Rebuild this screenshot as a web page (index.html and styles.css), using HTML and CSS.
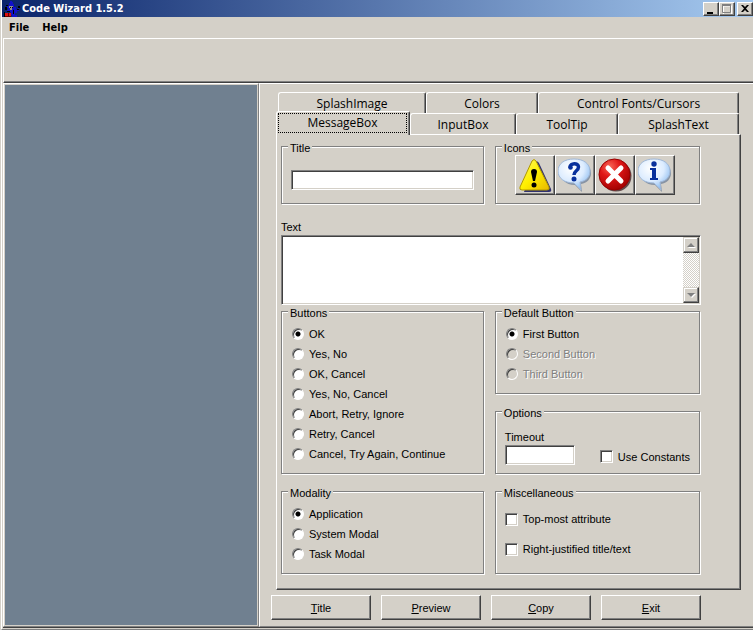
FILE: index.html
```html
<!DOCTYPE html>
<html lang="en">
<head>
<meta charset="utf-8">
<title>Code Wizard 1.5.2</title>
<link rel="stylesheet" href="styles.css">
</head>
<body>
<div class="window">
  <header class="titlebar">
    <svg class="logo" viewBox="0 0 16 16" width="16" height="16" aria-hidden="true">
      <path d="M6 0h2v1h1v2h1v3h2v2h2v-1h1v3h-2v2h-2v2h2v2H8v-2H7v-3H3V9h1V7H3V5h2V2h1z" fill="#1010c8"/>
      <path d="M2 4h2v1H2zM1 6h2v3H1zM0 11h1v5H0zM14 5h2v2h-2zM13 8h2v1h-2zM3 10h3v1H3zM9 9h1v4H9z" fill="#000"/>
      <path d="M5 5h4v2H8v2H6V7H5z" fill="#909090"/>
      <path d="M6 6h1v1H6zM8 6h1v1H8z" fill="#000"/>
      <path d="M1 12h6v3H1z" fill="#e01010"/>
      <path d="M4 12h1v3H4zM1 15h6v1H1z" fill="#600"/>
    </svg>
    <h1 class="caption">Code Wizard 1.5.2</h1>
    <div class="controls">
      <button class="control" type="button" aria-label="Minimize"><svg viewBox="0 0 12 10" width="12" height="10"><path d="M2 8h6v2H2z"/></svg></button>
      <button class="control" type="button" aria-label="Maximize" disabled><svg viewBox="0 0 12 10" width="12" height="10"><path d="M2.500 2v8.500h8V2M2 2h9" fill="none" stroke="#fff"/><path d="M1.500 1v7.500h8V1M1 1h9" fill="none" stroke="#808080"/><path d="M1 0h9v2H1z" fill="#808080"/></svg></button>
      <button class="control close" type="button" aria-label="Close"><svg viewBox="0 0 12 10" width="12" height="10"><path d="M2 1h2l2 2 2-2h2L7 4.500 10 8H8L6 6 4 8H2l3-3.500z"/></svg></button>
    </div>
  </header>
  <nav class="menu">
    <button class="menu-item" type="button">File</button>
    <button class="menu-item" type="button">Help</button>
  </nav>
  <div class="toolbar"></div>
  <div class="body">
    <aside class="sidebar"></aside>
    <main class="main">
      <div class="tabs" role="tablist">
        <div class="tab-row back">
          <button class="tab" type="button" role="tab">SplashImage</button>
          <button class="tab" type="button" role="tab">Colors</button>
          <button class="tab" type="button" role="tab">Control Fonts/Cursors</button>
        </div>
        <div class="tab-row front">
          <button class="tab selected" type="button" role="tab" aria-selected="true"><span>MessageBox</span></button>
          <button class="tab" type="button" role="tab">InputBox</button>
          <button class="tab" type="button" role="tab">ToolTip</button>
          <button class="tab" type="button" role="tab">SplashText</button>
        </div>
      </div>
      <form class="panel" id="wizard">
        <fieldset class="group title-group">
          <legend>Title</legend>
          <input class="field" type="text" aria-label="Title">
        </fieldset>
        <fieldset class="group icons-group">
          <legend>Icons</legend>
          <div class="icons">
            <button class="icon" type="button" aria-label="Warning">
              <svg viewBox="0 0 34 34" width="34" height="34">
                <defs><linearGradient id="y" x1="0" x2="1" y1="0" y2="1"><stop offset="0" stop-color="#fff870"/><stop offset=".5" stop-color="#fff000"/><stop offset="1" stop-color="#e8b800"/></linearGradient></defs>
                <path d="M17 4q2-2 4 1l12 26q1 3-2 3H6z" fill="#303070"/>
                <path d="M14 3q2-3 4 0l13 26q1 3-2 3H4q-3 0-2-3z" fill="url(#y)" stroke="#b09800"/>
                <path d="M16 11q3 0 3 3l-2 9h-2l-2-9q0-3 3-3z"/><circle cx="16" cy="27" r="2.500"/>
              </svg>
            </button>
            <button class="icon" type="button" aria-label="Question">
              <svg viewBox="0 0 34 34" width="34" height="34">
                <defs><radialGradient id="b" cx=".4" cy=".3" r=".75"><stop offset="0" stop-color="#fff"/><stop offset=".55" stop-color="#dcecff"/><stop offset="1" stop-color="#80b4ec"/></radialGradient></defs>
                <path d="M17 3c10 0 16 5 16 12 0 6-4 10-10 11l1 8-7-7C7 27 3 21 3 15 3 8 9 3 17 3z" fill="#8894a4"/>
                <path d="M16 1c10 0 16 5 16 12 0 6-4 10-10 11l1 8-7-7C6 25 0 20 0 13 0 6 6 1 16 1z" fill="url(#b)" stroke="#a0b8d8"/>
                <path d="M12 9.500c0-5 8.500-5 8.500-.5 0 4-4.500 3.500-4.500 8" fill="none" stroke="#08309c" stroke-width="3.500"/><circle cx="12.500" cy="9.500" r="2.300" fill="#08309c"/><circle cx="16" cy="21" r="2.500" fill="#08309c"/>
              </svg>
            </button>
            <button class="icon" type="button" aria-label="Error">
              <svg viewBox="0 0 34 34" width="34" height="34">
                <defs><radialGradient id="r" cx=".35" cy=".25" r=".8"><stop offset="0" stop-color="#f86858"/><stop offset=".4" stop-color="#e01818"/><stop offset="1" stop-color="#a00000"/></radialGradient></defs>
                <circle cx="18" cy="18" r="15.500" fill="#604848"/>
                <circle cx="16.500" cy="16.500" r="15.500" fill="url(#r)" stroke="#900"/>
                <path d="M10 10l13 13M23 10L10 23" stroke="#fff" stroke-width="5" stroke-linecap="round"/>
              </svg>
            </button>
            <button class="icon" type="button" aria-label="Information">
              <svg viewBox="0 0 34 34" width="34" height="34">
                <path d="M17 3c10 0 16 5 16 12 0 6-4 10-10 11l1 8-7-7C7 27 3 21 3 15 3 8 9 3 17 3z" fill="#8894a4"/>
                <path d="M16 1c10 0 16 5 16 12 0 6-4 10-10 11l1 8-7-7C6 25 0 20 0 13 0 6 6 1 16 1z" fill="url(#b)" stroke="#a0b8d8"/>
                <circle cx="16" cy="6" r="2.700" fill="#08309c"/><path d="M12 10h6v10h2v2h-8v-2h2v-8h-2z" fill="#08309c"/>
              </svg>
            </button>
          </div>
        </fieldset>
        <div class="message">
          <label for="text">Text</label>
          <div class="memo">
            <textarea id="text"></textarea>
            <div class="scrollbar">
              <button class="arrow" type="button" aria-label="Scroll up"><svg viewBox="0 0 9 5" width="9" height="5"><path d="M1 5h8L5 1z" fill="#fff"/><path d="M0 4h8L4 0z" fill="#808080"/></svg></button>
              <button class="arrow" type="button" aria-label="Scroll down"><svg viewBox="0 0 9 5" width="9" height="5"><path d="M1 1h8L5 5z" fill="#fff"/><path d="M0 0h8L4 4z" fill="#808080"/></svg></button>
            </div>
          </div>
        </div>
        <fieldset class="group choices">
          <legend>Buttons</legend>
          <label class="choice"><input type="radio" name="buttons" checked>OK</label>
          <label class="choice"><input type="radio" name="buttons">Yes, No</label>
          <label class="choice"><input type="radio" name="buttons">OK, Cancel</label>
          <label class="choice"><input type="radio" name="buttons">Yes, No, Cancel</label>
          <label class="choice"><input type="radio" name="buttons">Abort, Retry, Ignore</label>
          <label class="choice"><input type="radio" name="buttons">Retry, Cancel</label>
          <label class="choice"><input type="radio" name="buttons">Cancel, Try Again, Continue</label>
        </fieldset>
        <div class="stack">
          <fieldset class="group choices">
            <legend>Default Button</legend>
            <label class="choice"><input type="radio" name="default" checked>First Button</label>
            <label class="choice off"><input type="radio" name="default" disabled>Second Button</label>
            <label class="choice off"><input type="radio" name="default" disabled>Third Button</label>
          </fieldset>
          <fieldset class="group options">
            <legend>Options</legend>
            <div class="option-row">
              <div class="timeout">
                <label for="timeout">Timeout</label>
                <input class="field" id="timeout" type="text">
              </div>
              <label class="choice"><input type="checkbox">Use Constants</label>
            </div>
          </fieldset>
        </div>
        <fieldset class="group choices last">
          <legend>Modality</legend>
          <label class="choice"><input type="radio" name="modality" checked>Application</label>
          <label class="choice"><input type="radio" name="modality">System Modal</label>
          <label class="choice"><input type="radio" name="modality">Task Modal</label>
        </fieldset>
        <fieldset class="group choices last roomy">
          <legend>Miscellaneous</legend>
          <label class="choice"><input type="checkbox">Top-most attribute</label>
          <label class="choice"><input type="checkbox">Right-justified title/text</label>
        </fieldset>
      </form>
      <div class="actions">
        <button class="action" type="button"><u>T</u>itle</button>
        <button class="action" type="button"><u>P</u>review</button>
        <button class="action" type="button"><u>C</u>opy</button>
        <button class="action" type="button"><u>E</u>xit</button>
      </div>
    </main>
  </div>
</div>
</body>
</html>
```
FILE: styles.css
```css
:root {
  --face: #d4d0c8;
  --shade: #808080;
  --dark: #404040;
  --light: #fff;
}

* { box-sizing: border-box; }

body {
  margin: 0;
  background: var(--face);
  color: #000;
  font: 11px/14px "Liberation Sans", Arial, sans-serif;
}

button, input, textarea {
  margin: 0;
  font: inherit;
  color: inherit;
  border-radius: 0;
}

.window {
  min-height: 100vh;
  display: flex;
  flex-direction: column;
  margin-left: 1px;
  border-left: 1px solid var(--light);
  border-bottom: 1px solid var(--shade);
  padding-bottom: 1px;
}

.titlebar {
  height: 17px;
  display: flex;
  align-items: center;
  gap: 2px;
  padding-left: 2px;
  background: linear-gradient(to right, #0a246a, #a6caf0);
}

.caption {
  flex: 1;
  margin: 0;
  color: #fff;
  font: bold 11px/16px "DejaVu Sans Condensed", "DejaVu Sans", sans-serif;
}

.controls { display: flex; }

.control {
  width: 16px;
  height: 14px;
  padding: 0;
  display: flex;
  justify-content: center;
  align-items: center;
  background: var(--face);
  border: 1px solid;
  border-color: var(--light) var(--dark) var(--dark) var(--light);
  box-shadow: inset -1px -1px var(--shade);
}

.control.close { margin-left: 2px; }

.menu {
  height: 21px;
  display: flex;
  align-items: center;
  gap: 13px;
  padding: 0 7px;
}

.menu-item {
  padding: 0;
  border: 0;
  background: none;
  font: bold 11px/16px "DejaVu Sans Condensed", "DejaVu Sans", sans-serif;
}

.toolbar {
  height: 45px;
  margin-left: 1px;
  border-top: 1px solid var(--light);
  border-left: 1px solid var(--light);
  border-bottom: 1px solid var(--dark);
  box-shadow: inset 0 -1px var(--shade);
}

.body {
  flex: 1;
  display: grid;
  grid-template-columns: 256px 1fr;
  margin-left: 1px;
  border-bottom: 1px solid var(--dark);
}

.sidebar {
  padding: 1px;
  background: #708090 content-box;
  border: 1px solid;
  border-color: var(--light) var(--shade) var(--shade) var(--light);
}

.main {
  min-width: 0;
  display: flex;
  flex-direction: column;
  padding: 8px 12px 6px 16px;
  border: solid;
  border-width: 1px 0 1px 1px;
  border-color: var(--light) var(--light) var(--shade) var(--light);
}

.tabs { padding: 0 2px; }

.tab-row { display: grid; }
.back { grid-template-columns: 148fr 112fr 201fr; }
.front { grid-template-columns: 132fr 106fr 102fr 121fr; }

.tab {
  height: 21px;
  padding: 2px 0 0;
  background: var(--face);
  border: 1px solid;
  border-color: var(--light) var(--dark) var(--face) var(--light);
  border-bottom: 0;
  border-radius: 3px 2px 0 0;
  box-shadow: inset -1px 0 var(--shade);
  font: 12px/16px "Open Sans", "Noto Sans", sans-serif;
}

.tab.selected {
  position: relative;
  height: 24px;
  margin: -2px 0 -1px -2px;
  padding: 1px 2px 2px 1px;
  display: flex;
}

.tab.selected span {
  flex: 1;
  padding-top: 1px;
  border: 1px dotted #000;
}

.panel {
  flex: 1;
  display: grid;
  grid-template-columns: 1fr 1fr;
  grid-template-rows: auto auto auto 1fr;
  column-gap: 10px;
  padding: 5px 39px 14px 4px;
  border: 1px solid;
  border-color: var(--light) var(--dark) var(--dark) var(--light);
  box-shadow: inset -1px -1px var(--shade);
}

.group {
  min-width: 0;
  margin: 0 1px 1px 0;
  padding: 0 9px;
  border: 1px solid var(--shade);
  box-shadow: 1px 1px var(--light), inset 1px 1px var(--light);
}

.group legend {
  height: 13px;
  margin-left: -3px;
  padding: 1px 2px 0;
  background: var(--face);
}

.title-group { padding-top: 17px; padding-bottom: 13px; }
.icons-group { padding-top: 2px; padding-bottom: 8px; }

.field {
  display: block;
  width: 100%;
  height: 20px;
  padding: 2px 4px;
}

.field, .memo, input[type="checkbox"] {
  background: #fff;
  border: 1px solid;
  border-color: var(--shade) var(--light) var(--light) var(--shade);
  box-shadow: inset 1px 1px var(--dark), inset -1px -1px var(--face);
}

.icons { display: flex; padding-left: 10px; }

.icon {
  width: 40px;
  height: 40px;
  padding: 0;
  display: grid;
  place-items: center;
  background: var(--face);
  border: 1px solid;
  border-color: var(--light) var(--dark) var(--dark) var(--light);
  box-shadow: inset -1px -1px var(--shade);
}

.message {
  grid-column: 1 / -1;
  padding-top: 15px;
}

.message label { display: block; height: 15px; }

.memo {
  display: flex;
  height: 70px;
  padding: 1px;
}

.memo textarea {
  flex: 1;
  min-width: 0;
  border: 0;
  padding: 2px;
  background: none;
  resize: none;
  overflow: hidden;
}

.scrollbar {
  width: 16px;
  display: flex;
  flex-direction: column;
  justify-content: space-between;
  background: repeating-conic-gradient(#fff 0 25%, var(--face) 0 50%) 0 0 / 2px 2px;
}

.arrow {
  height: 16px;
  padding: 0;
  display: grid;
  place-items: center;
  background: var(--face);
  border: 1px solid;
  border-color: var(--face) var(--dark) var(--dark) var(--face);
  box-shadow: inset -1px -1px var(--shade), inset 1px 1px var(--light);
}

.choices { padding-top: 6px; padding-bottom: 9px; }

.choice {
  height: 20px;
  display: flex;
  align-items: center;
  gap: 5px;
  white-space: nowrap;
}

.roomy .choice { height: 30px; }

.off { color: var(--shade); text-shadow: 1px 1px var(--light); }

input[type="radio"], input[type="checkbox"] {
  appearance: none;
  flex: none;
  width: 13px;
  height: 13px;
}

input[type="radio"] {
  width: 12px;
  height: 12px;
  margin-left: 1px;
  border: 1px solid;
  border-color: var(--shade) var(--light) var(--light) var(--shade);
  border-radius: 50%;
  background: #fff;
  box-shadow: inset 1px 1px var(--dark);
}

input[type="radio"]:checked {
  background: radial-gradient(circle, #000 2px, #fff 3px);
}

input[type="radio"]:disabled { background: var(--face); }

.stack {
  display: flex;
  flex-direction: column;
  justify-content: space-between;
}

.options { padding-top: 12px; padding-bottom: 8px; }

.option-row {
  display: flex;
  align-items: flex-end;
  gap: 25px;
}

.option-row .choice { height: 17px; }

.timeout { width: 70px; }
.timeout label { display: block; height: 15px; }

.last { align-self: start; margin-top: 10px; }

.actions {
  display: grid;
  grid-template-columns: repeat(4, 1fr);
  gap: 10px;
  margin: 5px 40px 0 -5px;
}

.action {
  height: 25px;
  padding: 0;
  background: var(--face);
  border: 1px solid;
  border-color: var(--light) var(--dark) var(--dark) var(--light);
  box-shadow: inset -1px -1px var(--shade);
}
```
